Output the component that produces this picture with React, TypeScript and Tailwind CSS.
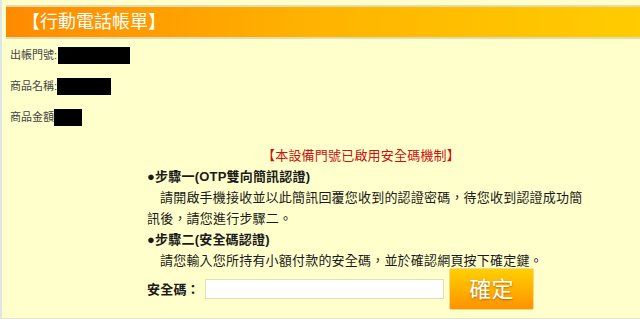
const font = { fontFamily: '"Liberation Sans", "Noto Sans CJK TC", sans-serif' };

const infoRows = [
  { label: "出帳門號:", w: "w-[72px]", ml: "ml-[1px]" },
  { label: "商品名稱:", w: "w-[54px]", ml: "ml-0" },
  { label: "商品金額", w: "w-[28px]", ml: "ml-0" },
];

const App = () => {
  return (
    <main
      className="h-[319px] w-[640px] overflow-hidden border-l-2 border-b border-l-[#dfe6ea] border-b-[#e4e2c8] bg-[#ffffcc] pt-[5px] text-[#1a1a1a]"
      style={font}
    >
      {/* ------- Header ------- */}
      <div className="ml-[4px] border-y-2 border-[#dedcb0]">
        <div className="flex h-[30px] items-center bg-gradient-to-r from-[#ff8a00] via-[#ffb400] to-[#ffcc00] pl-[16px] text-[18px] text-white">
          【行動電話帳單】
        </div>
      </div>

      {/* ------- Info ------- */}
      <div className="mt-[8px] flex flex-col gap-[14px] pl-[8px]">
        {infoRows.map((row) => (
          <div key={row.label} className="flex h-[17px] items-center text-[11px] text-[#444]">
            <span>{row.label}</span>
            <span className={`h-[17px] bg-black ${row.w} ${row.ml}`} />
          </div>
        ))}
      </div>

      {/* ------- Notice ------- */}
      <div className="ml-[145px] mt-[19px] w-[442px] text-[13px] leading-[21px] tracking-[0.2px]">
        <p className="pr-[14px] text-center text-[#cc1111]">【本設備門號已啟用安全碼機制】</p>
        <p className="font-semibold">●步驟一(OTP雙向簡訊認證)</p>
        <p className="indent-[13px]">
          請開啟手機接收並以此簡訊回覆您收到的認證密碼，待您收到認證成功簡訊後，請您進行步驟二。
        </p>
        <p className="font-semibold">●步驟二(安全碼認證)</p>
        <p className="indent-[13px]">請您輸入您所持有小額付款的安全碼，並於確認網頁按下確定鍵。</p>

        <div className="-mt-[3px] flex items-center">
          <span className="w-[58px] font-semibold">安全碼：</span>
          <input
            type="text"
            className="h-[20px] w-[239px] border border-[#e2dfb4] bg-white outline-none"
          />
          <button
            type="button"
            className="ml-[5px] h-[42px] w-[85px] rounded-[2px] border border-[#f0d890] bg-gradient-to-b from-[#ffd000] to-[#ff9200] text-[22px] text-white [text-shadow:0_1px_2px_rgba(120,60,0,0.6)]"
          >
            確定
          </button>
        </div>
      </div>
    </main>
  );
};

export default App;
